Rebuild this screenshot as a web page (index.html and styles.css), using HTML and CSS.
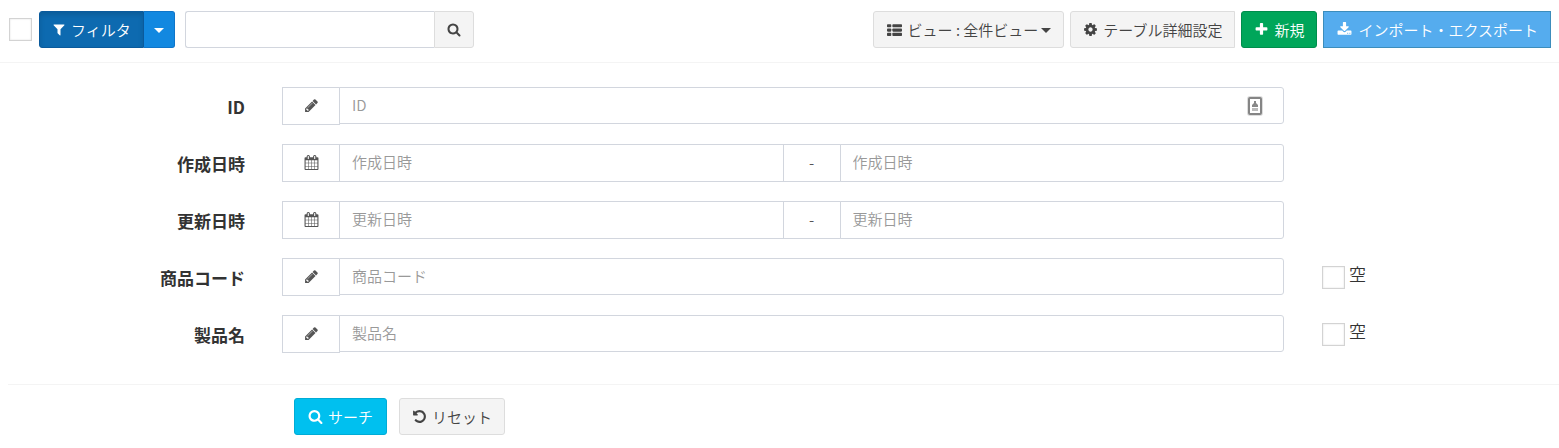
FILE: index.html
```
<!DOCTYPE html>
<html lang="ja">
<head>
<meta charset="utf-8">
<title>フィルタ</title>
<link rel="stylesheet" href="styles.css">
</head>
<body>
<svg class="sprite" aria-hidden="true">
  <symbol id="filter" viewBox="0 0 1792 1792"><path d="M1595 295q17 41-14 70l-493 493v742q0 42-39 59-13 5-25 5-27 0-45-19l-256-256q-19-19-19-45v-486l-493-493q-31-29-14-70 17-39 59-39h1280q42 0 59 39z"/></symbol>
  <symbol id="search" viewBox="0 0 1792 1792"><path d="M1216 832q0-185-131.5-316.5t-316.5-131.5-316.5 131.5-131.5 316.5 131.5 316.5 316.5 131.5 316.5-131.5 131.5-316.5zm512 832q0 52-38 90t-90 38q-54 0-90-38l-343-342q-179 124-399 124-143 0-273.5-55.5t-225-150-150-225-55.5-273.5 55.5-273.5 150-225 225-150 273.5-55.5 273.5 55.5 225 150 150 225 55.5 273.5q0 220-124 399l343 343q37 37 37 90z"/></symbol>
  <symbol id="list" viewBox="0 0 1792 1792"><rect y="256" width="512" height="384" rx="96"/><rect x="640" y="256" width="1152" height="384" rx="96"/><rect y="768" width="512" height="384" rx="96"/><rect x="640" y="768" width="1152" height="384" rx="96"/><rect y="1280" width="512" height="384" rx="96"/><rect x="640" y="1280" width="1152" height="384" rx="96"/></symbol>
  <symbol id="cog" viewBox="0 0 1792 1792"><path d="M1152 896q0-106-75-181t-181-75-181 75-75 181 75 181 181 75 181-75 75-181zm512-109v222q0 12-8 23t-20 13l-185 28q-19 54-39 91 35 50 107 138 10 12 10 25t-9 23q-27 37-99 108t-94 71q-12 0-26-9l-138-108q-44 23-91 38-16 136-29 186-7 28-36 28h-222q-14 0-24.5-8.5t-11.5-21.5l-28-184q-49-16-90-37l-141 107q-10 9-25 9-14 0-25-11-126-114-165-168-7-10-7-23 0-12 8-23 15-21 51-66.5t54-70.5q-27-50-41-99l-183-27q-13-2-21-12.5t-8-23.5v-222q0-12 8-23t19-13l186-28q14-46 39-92-40-57-107-138-10-12-10-24 0-10 9-23 26-36 98.5-107.5t94.5-71.5q13 0 26 10l138 107q44-23 91-38 16-136 29-186 7-28 36-28h222q14 0 24.5 8.5t11.5 21.5l28 184q49 16 90 37l142-107q9-9 24-9 13 0 25 10 129 119 165 170 7 8 7 22 0 12-8 23-15 21-51 66.5t-54 70.5q26 50 41 98l183 28q13 2 21 12.5t8 23.5z"/></symbol>
  <symbol id="plus" viewBox="0 0 1792 1792"><path d="M1600 736v192q0 40-28 68t-68 28h-416v416q0 40-28 68t-68 28h-192q-40 0-68-28t-28-68v-416h-416q-40 0-68-28t-28-68v-192q0-40 28-68t68-28h416v-416q0-40 28-68t68-28h192q40 0 68 28t28 68v416h416q40 0 68 28t28 68z"/></symbol>
  <symbol id="download" viewBox="0 0 1792 1792"><path d="M1344 1344q0-26-19-45t-45-19-45 19-19 45 19 45 45 19 45-19 19-45zm256 0q0-26-19-45t-45-19-45 19-19 45 19 45 45 19 45-19 19-45zm128-224v320q0 40-28 68t-68 28h-1472q-40 0-68-28t-28-68v-320q0-40 28-68t68-28h465l135 136q58 56 136 56t136-56l136-136h464q40 0 68 28t28 68zm-325-569q17 41-14 70l-448 448q-18 19-45 19t-45-19l-448-448q-31-29-14-70 17-39 59-39h256v-448q0-26 19-45t45-19h256q26 0 45 19t19 45v448h256q42 0 59 39z"/></symbol>
  <symbol id="pencil" viewBox="0 0 1792 1792"><path d="M491 1536l91-91-235-235-91 91v107h128v128h107zm523-928q0-22-22-22-10 0-17 7l-542 542q-7 7-7 17 0 22 22 22 10 0 17-7l542-542q7-7 7-17zm-54-192l416 416-832 832h-416v-416zm683 96q0 53-37 90l-166 166-416-416 166-165q36-38 90-38 53 0 91 38l235 234q37 39 37 91z"/></symbol>
  <symbol id="calendar" viewBox="0 0 1792 1792"><path d="M192 1664h288v-288h-288v288zm352 0h320v-288h-320v288zm-352-352h288v-320h-288v320zm352 0h320v-320h-320v320zm-352-384h288v-288h-288v288zm736 736h320v-288h-320v288zm-384-736h320v-288h-320v288zm768 736h288v-288h-288v288zm-384-352h320v-320h-320v320zm-352-864v-288q0-13-9.5-22.5t-22.5-9.5h-64q-13 0-22.5 9.5t-9.5 22.5v288q0 13 9.5 22.5t22.5 9.5h64q13 0 22.5-9.5t9.5-22.5zm736 864h288v-320h-288v320zm-384-384h320v-288h-320v288zm384 0h288v-288h-288v288zm32-480v-288q0-13-9.5-22.5t-22.5-9.5h-64q-13 0-22.5 9.5t-9.5 22.5v288q0 13 9.5 22.5t22.5 9.5h64q13 0 22.5-9.5t9.5-22.5zm384-64v1280q0 52-38 90t-90 38h-1408q-52 0-90-38t-38-90v-1280q0-52 38-90t90-38h128v-96q0-66 47-113t113-47h64q66 0 113 47t47 113v96h384v-96q0-66 47-113t113-47h64q66 0 113 47t47 113v96h128q52 0 90 38t38 90z"/></symbol>
  <symbol id="undo" viewBox="0 0 1792 1792"><path d="M1664 896q0 156-61 298t-164 245-245 164-298 61q-172 0-327-72.5t-264-204.5q-7-10-6.5-22.5t8.5-20.5l137-138q10-9 25-9 16 2 23 12 73 95 179 147t225 52q104 0 198.5-40.5t163.5-109.5 109.5-163.5 40.5-198.5-40.5-198.5-109.5-163.5-163.5-109.5-198.5-40.5q-98 0-188 35.5t-160 101.5l137 138q31 30 14 69-17 40-59 40h-448q-26 0-45-19t-19-45v-448q0-42 40-59 39-17 69 14l130 129q107-101 244.5-156.5t284.5-55.5q156 0 298 61t245 164 164 245 61 298z"/></symbol>
</svg>

<header class="toolbar">
  <div class="tools">
    <input class="check" type="checkbox" aria-label="すべて選択">
    <div class="split">
      <button class="btn btn-filter" type="button"><svg class="icon icon-narrow"><use href="#filter"/></svg>フィルタ</button>
      <button class="btn btn-toggle" type="button" aria-label="フィルタのメニュー"><span class="caret"></span></button>
    </div>
    <form class="quick">
      <input class="quick-input" type="text" aria-label="検索">
      <button class="btn quick-btn" type="button" aria-label="検索"><svg class="icon icon-narrow"><use href="#search"/></svg></button>
    </form>
  </div>
  <div class="actions">
    <button class="btn" type="button"><svg class="icon icon-wide"><use href="#list"/></svg>ビュー : 全件ビュー<span class="caret caret-text"></span></button>
    <button class="btn btn-flat-end" type="button"><svg class="icon"><use href="#cog"/></svg>テーブル詳細設定</button>
    <button class="btn btn-new" type="button"><svg class="icon"><use href="#plus"/></svg>新規</button>
    <button class="btn btn-import" type="button"><svg class="icon icon-wide"><use href="#download"/></svg>インポート・エクスポート</button>
  </div>
</header>

<form class="filters">
  <div class="rows">
    <div class="row">
      <label class="name" for="id">ID</label>
      <div class="group">
        <span class="addon"><svg class="icon"><use href="#pencil"/></svg></span>
        <input class="field" id="id" type="text" placeholder="ID">
        <svg class="autofill" viewBox="0 0 16 20" aria-hidden="true"><rect class="halo" x="1" y="1" width="14" height="18" rx="2"/><rect class="card" x="2" y="2" width="12" height="16" rx="1"/><path d="M7 5h2v2l2 2v2H5V9l2-2z"/><path class="line" d="M5 12h6v3H5z"/></svg>
      </div>
    </div>
    <div class="row">
      <label class="name" for="created">作成日時</label>
      <div class="group group-range">
        <span class="addon"><svg class="icon"><use href="#calendar"/></svg></span>
        <input class="field" id="created" type="text" placeholder="作成日時">
        <span class="addon">-</span>
        <input class="field" type="text" placeholder="作成日時" aria-label="作成日時">
      </div>
    </div>
    <div class="row">
      <label class="name" for="updated">更新日時</label>
      <div class="group group-range">
        <span class="addon"><svg class="icon"><use href="#calendar"/></svg></span>
        <input class="field" id="updated" type="text" placeholder="更新日時">
        <span class="addon">-</span>
        <input class="field" type="text" placeholder="更新日時" aria-label="更新日時">
      </div>
    </div>
    <div class="row">
      <label class="name" for="code">商品コード</label>
      <div class="group">
        <span class="addon"><svg class="icon"><use href="#pencil"/></svg></span>
        <input class="field" id="code" type="text" placeholder="商品コード">
      </div>
      <label class="empty"><input class="check" type="checkbox">空</label>
    </div>
    <div class="row">
      <label class="name" for="product">製品名</label>
      <div class="group">
        <span class="addon"><svg class="icon"><use href="#pencil"/></svg></span>
        <input class="field" id="product" type="text" placeholder="製品名">
      </div>
      <label class="empty"><input class="check" type="checkbox">空</label>
    </div>
  </div>
  <div class="footer">
    <div class="submit">
      <button class="btn btn-search" type="button"><svg class="icon"><use href="#search"/></svg>サーチ</button>
      <button class="btn" type="reset"><svg class="icon"><use href="#undo"/></svg>リセット</button>
    </div>
  </div>
</form>
</body>
</html>
```

FILE: styles.css
```
* {
  box-sizing: border-box;
}

body,
button,
input {
  font-family: "Noto Sans CJK JP", sans-serif;
  font-size: 15px;
  font-weight: 350;
  line-height: 21px;
  color: #333;
}

body {
  margin: 0;
  background: #fff;
}

.sprite {
  display: none;
}

.icon {
  flex: none;
  width: 15px;
  height: 15px;
  fill: currentColor;
}

.icon-narrow {
  width: 14px;
}

.icon-wide {
  width: 17px;
}

.toolbar {
  display: flex;
  justify-content: space-between;
  padding: 11px 8px 14px;
  border-bottom: 1px solid #f4f4f4;
}

.tools,
.actions,
.split,
.quick,
.group,
.submit,
.empty {
  display: flex;
}

.tools {
  align-items: center;
}

.actions {
  gap: 6px;
}

.check {
  appearance: none;
  flex: none;
  width: 23px;
  height: 23px;
  margin: 0;
  border: 1px solid #d3d3d3;
  box-shadow: inset 0 0 2px #ddd;
  background: #fff;
}

.tools .check {
  margin: 0 7px 0 1px;
}

.btn {
  display: flex;
  align-items: center;
  gap: 5px;
  height: 37px;
  margin: 0;
  padding: 0 12px 1px;
  border: 1px solid #ddd;
  border-radius: 3px;
  background: #f4f4f4;
  color: #444;
  white-space: nowrap;
}

.caret {
  border: 5px solid transparent;
  border-top-color: currentColor;
  border-bottom: 0;
}

.caret-text {
  margin: 3px 0 0 -2px;
}

.btn-filter {
  border-color: #0a5a9c;
  border-radius: 3px 0 0 3px;
  background: #0d6ab0;
  box-shadow: inset 0 3px 5px rgba(0, 0, 0, 0.13);
  color: #fff;
}

.btn-toggle {
  padding: 2px 10px 0;
  border-color: #0f75c9;
  border-left: 0;
  border-radius: 0 3px 3px 0;
  background: #1288e0;
  color: #fff;
}

.quick {
  margin-left: 10px;
}

.quick-input {
  width: 249px;
  padding: 0 12px;
  border: 1px solid #d2d6de;
  border-right: 0;
  border-radius: 3px 0 0 3px;
}

.quick-btn {
  border-radius: 0 3px 3px 0;
}

.btn-flat-end {
  border-radius: 3px 0 0 3px;
}

.btn-new {
  border-color: #008d4c;
  background: #00a65a;
  color: #fff;
}

.btn-import {
  border-color: #3c8dbc;
  border-radius: 0;
  background: #55acee;
  color: #fff;
}

.btn-search {
  padding: 0 13px 1px;
  border-color: #00acd6;
  background: #00c0ef;
  color: #fff;
}

.rows {
  display: grid;
  gap: 19px;
  padding: 24px 2px 31px 9px;
}

.row {
  display: grid;
  grid-template-columns: 2fr 8fr 2fr;
  align-items: center;
}

.name {
  padding-right: 22px;
  font-size: 17px;
  font-weight: 700;
  text-align: right;
}

.group {
  position: relative;
  align-items: flex-start;
  margin: 0 15px;
}

.addon {
  display: flex;
  align-items: center;
  justify-content: center;
  flex: none;
  width: 58px;
  height: 38px;
  padding-bottom: 2px;
  border: 1px solid #d2d6de;
  color: #555;
}

.field {
  flex: 1;
  min-width: 0;
  height: 37px;
  margin-left: -1px;
  padding: 0 12px 3px;
  border: 1px solid #d2d6de;
  background: #fff;
}

.field:last-of-type {
  border-radius: 0 3px 3px 0;
}

.group-range .field {
  height: 38px;
}

.field + .addon {
  margin-left: -1px;
}

.field::placeholder {
  color: #999;
  opacity: 1;
}

.autofill {
  position: absolute;
  top: 9px;
  right: 21px;
  width: 16px;
  height: 20px;
  fill: #888;
}

.halo {
  fill: none;
  stroke: #ddd;
  stroke-width: 2;
}

.card {
  fill: #fff;
  stroke: #858585;
  stroke-width: 2;
}

.line {
  fill: #bbb;
}

.empty {
  align-items: flex-start;
  gap: 4px;
  padding-left: 23px;
  font-size: 17px;
  line-height: 15px;
}

.footer {
  margin-left: 8px;
  padding: 13px 0;
  border-top: 1px solid #f4f4f4;
}

.submit {
  gap: 12px;
  margin-left: 286px;
}
```
